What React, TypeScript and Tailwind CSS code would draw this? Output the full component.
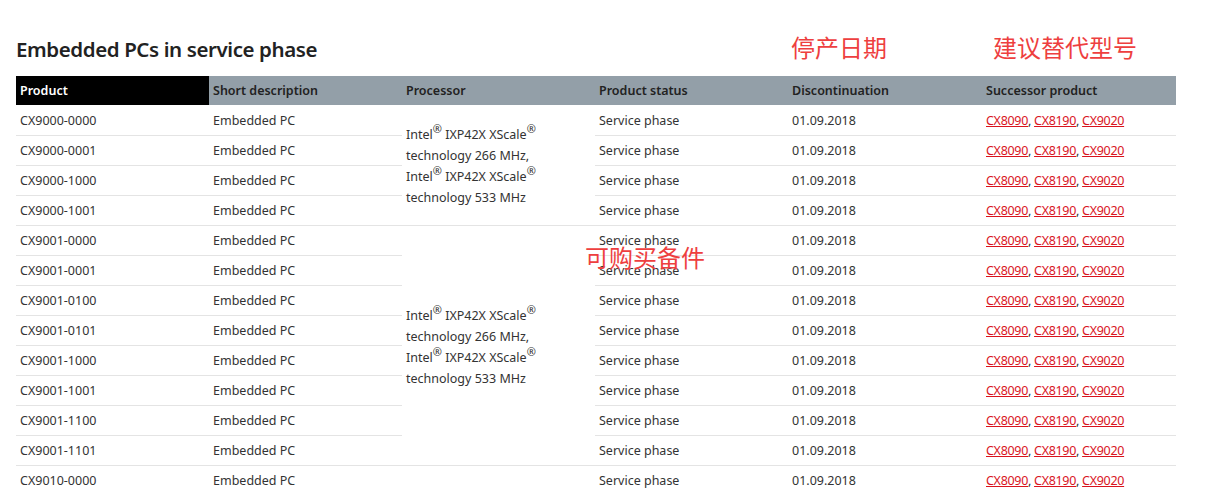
const rows = [
  "CX9000-0000",
  "CX9000-0001",
  "CX9000-1000",
  "CX9000-1001",
  "CX9001-0000",
  "CX9001-0001",
  "CX9001-0100",
  "CX9001-0101",
  "CX9001-1000",
  "CX9001-1001",
  "CX9001-1100",
  "CX9001-1101",
  "CX9010-0000",
];

// processor cell spans: row index -> rowSpan
const groups: Record<number, number> = { 0: 4, 4: 8, 12: 1 };

function Reg() {
  return <span className="relative -top-[6px] text-[11px] leading-none">®</span>;
}

function Processor({ show }: { show: boolean }) {
  if (!show) return null;
  return (
    <div className="leading-[21px]">
      Intel<Reg /> IXP42X XScale<Reg />
      <br />
      technology 266 MHz,
      <br />
      Intel<Reg /> IXP42X XScale<Reg />
      <br />
      technology 533 MHz
    </div>
  );
}

function Successor() {
  return (
    <span className="tracking-[-0.3px]">
      <a className="text-[#d9141e] underline" href="#">CX8090</a>,{" "}
      <a className="text-[#d9141e] underline" href="#">CX8190</a>,{" "}
      <a className="text-[#d9141e] underline" href="#">CX9020</a>
    </span>
  );
}

export default function App() {
  const cell = "h-[30px] border-b border-[#e4e4e4] px-1 pt-[3px] align-middle";
  const note = "absolute font-['Noto_Sans_CJK_SC',sans-serif] text-[24px] leading-[30px] text-[#ee3f3f]";
  return (
    <main className="relative min-h-screen bg-white font-['Noto_Sans',sans-serif] text-[12.5px] text-[#333]">
      {/* red annotations pasted over the screenshot */}
      <span className={`${note} left-[791px] top-[32px]`}>停产日期</span>
      <span className={`${note} left-[993px] top-[32px]`}>建议替代型号</span>
      <span className={`${note} left-[585px] top-[242px]`}>可购买备件</span>

      <section className="px-4 pt-[34px]">
        <h2 className="mb-3 text-[20.5px] font-semibold leading-[30px] tracking-[-0.4px] text-[#222]">
          Embedded PCs in service phase
        </h2>

        <table className="w-[1160px] table-fixed border-collapse text-left">
          <thead>
            <tr className="h-[29px] bg-[#939fa8] text-[#222]">
              <th className="w-[193px] bg-black px-1 pt-[2px] font-semibold text-white">Product</th>
              <th className="w-[193px] px-1 pt-[2px] font-semibold">Short description</th>
              <th className="w-[193px] px-1 pt-[2px] font-semibold">Processor</th>
              <th className="w-[193px] px-1 pt-[2px] font-semibold">Product status</th>
              <th className="w-[194px] px-1 pt-[2px] font-semibold">Discontinuation</th>
              <th className="w-[194px] px-1 pt-[2px] font-semibold">Successor product</th>
            </tr>
          </thead>
          <tbody>
            {rows.map((p, i) => (
              <tr key={p}>
                <td className={cell}>{p}</td>
                <td className={cell}>Embedded PC</td>
                {groups[i] !== undefined && (
                  <td rowSpan={groups[i]} className={cell}>
                    <Processor show={i < 12} />
                  </td>
                )}
                <td className={cell}>Service phase</td>
                <td className={cell}>01.09.2018</td>
                <td className={cell}>
                  <Successor />
                </td>
              </tr>
            ))}
          </tbody>
        </table>
      </section>
    </main>
  );
}
